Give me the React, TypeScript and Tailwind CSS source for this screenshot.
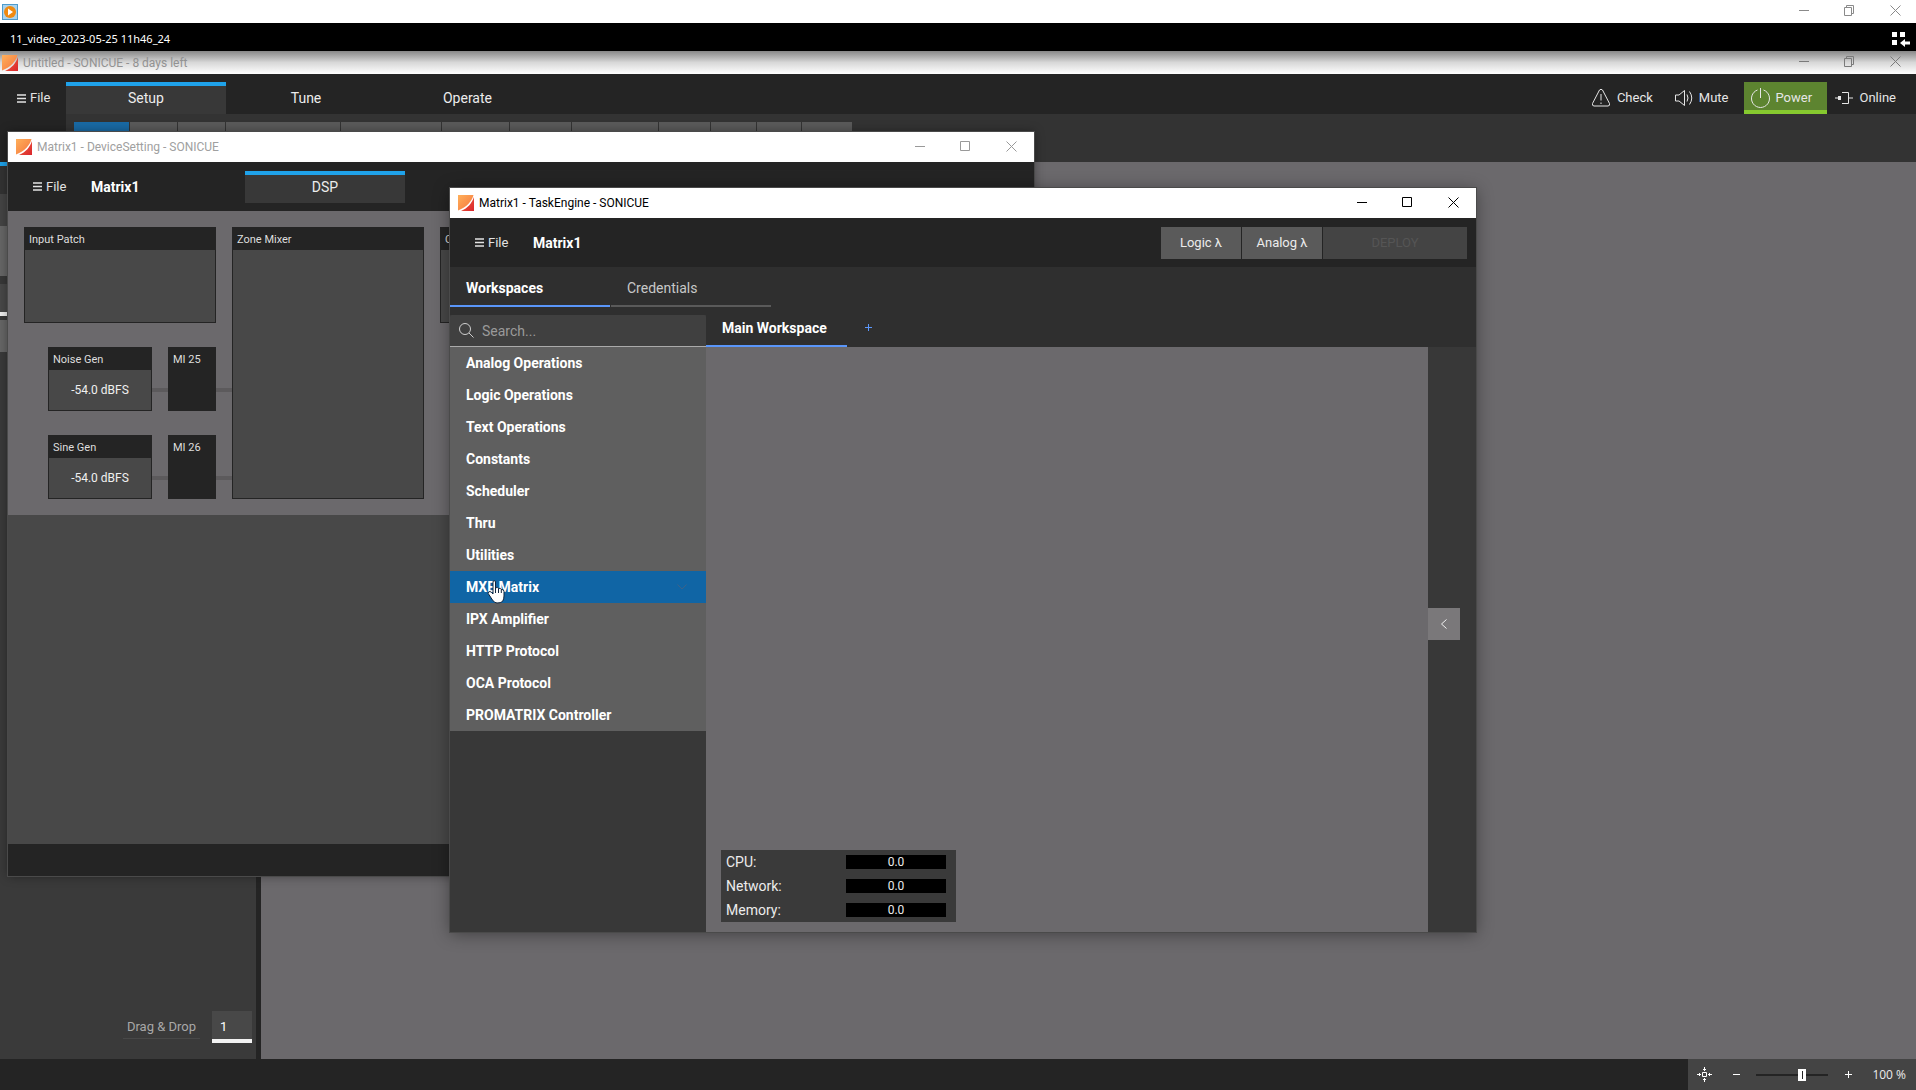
import type { ReactNode } from 'react';

const categories = [
  'Analog Operations',
  'Logic Operations',
  'Text Operations',
  'Constants',
  'Scheduler',
  'Thru',
  'Utilities',
  'MXE Matrix',
  'IPX Amplifier',
  'HTTP Protocol',
  'OCA Protocol',
  'PROMATRIX Controller',
];

const stats = [
  { label: 'CPU:', value: '0.0' },
  { label: 'Network:', value: '0.0' },
  { label: 'Memory:', value: '0.0' },
];

function SonicueLogo() {
  return (
    <svg width="16" height="16" viewBox="0 0 16 16" className="shrink-0" aria-hidden="true">
      <defs>
        <linearGradient id="logo-a" x1="0" y1="0" x2="1" y2="1">
          <stop offset="0" stopColor="#ffb05a" />
          <stop offset="1" stopColor="#f4733c" />
        </linearGradient>
        <linearGradient id="logo-b" x1="0" y1="0" x2="1" y2="1">
          <stop offset="0" stopColor="#f4683f" />
          <stop offset="1" stopColor="#d9252c" />
        </linearGradient>
      </defs>
      <path d="M0 0H15.500C14 6 9 12 0 15.500Z" fill="url(#logo-a)" />
      <path d="M16 2V16H3C10 13 14 8 16 2Z" fill="url(#logo-b)" />
    </svg>
  );
}

function WindowControls({ restored = false, className }: { restored?: boolean; className: string }) {
  return (
    <div className={`flex items-center ${className}`}>
      <button type="button" aria-label="Minimize" className="flex w-[45px] justify-center">
        <svg width="11" height="11" viewBox="0 0 11 11" stroke="currentColor" fill="none">
          <path d="M0 5.500H10" />
        </svg>
      </button>
      <button type="button" aria-label={restored ? 'Restore' : 'Maximize'} className="flex w-[45px] justify-center">
        <svg width="11" height="11" viewBox="0 0 11 11" stroke="currentColor" fill="none">
          {restored ? <path d="M.5 2.500H7.500V10.500H.5ZM2.500 2.500V.5H9.500V8.500H7.500" /> : <path d="M.5 .5H9.500V9.500H.5Z" />}
        </svg>
      </button>
      <button type="button" aria-label="Close" className="flex w-[46px] justify-center">
        <svg width="11" height="11" viewBox="0 0 11 11" stroke="currentColor" fill="none">
          <path d="M.5 .5L10.500 10.500M10.500 .5L.5 10.500" />
        </svg>
      </button>
    </div>
  );
}

function FileButton({ className }: { className: string }) {
  return (
    <button type="button" className={`flex items-center gap-1 text-[13px] text-[#e2e2e2] ${className}`}>
      <svg width="9" height="9" viewBox="0 0 9 9" stroke="currentColor" strokeWidth="1.500" aria-hidden="true">
        <path d="M0 1H9M0 4.500H9M0 8H9" />
      </svg>
      File
    </button>
  );
}

function StatusButton({ label, children }: { label: string; children: ReactNode }) {
  return (
    <button type="button" className="flex h-8 items-center gap-[6px] text-[13px] text-[#e6e6e6]">
      {children}
      {label}
    </button>
  );
}

function MediaPlayerBar() {
  return (
    <>
      <div className="flex h-[23px] shrink-0 items-center justify-between bg-white pl-[2px]">
        <svg width="16" height="16" viewBox="0 0 16 16" aria-hidden="true">
          <rect x=".5" y=".5" width="15" height="15" fill="#a9d3ee" stroke="#4f9bcb" />
          <circle cx="8" cy="8" r="6" fill="#f08a10" />
          <path d="M6 4.500L11 8L6 11.500Z" fill="#fff" />
        </svg>
        <WindowControls restored className="-mr-0.5 pb-[2px] text-[#8a8a8a]" />
      </div>
      <div className="flex h-7 shrink-0 items-center justify-between bg-black pl-[10px] pr-[6px] pt-1 text-white">
        <span className="font-['Noto_Sans',sans-serif] text-[11px]">11_video_2023-05-25 11h46_24</span>
        <button type="button" aria-label="Switch to library">
          <svg width="18" height="16" viewBox="0 0 18 16" fill="#fff">
            <path d="M0 1H5V6H0ZM8 1H13V6H8ZM0 9H5V14H0ZM8 12L13 8V10.500H18V13.500H13V16Z" />
          </svg>
        </button>
      </div>
    </>
  );
}

function MainHeader() {
  return (
    <header className="shrink-0">
      <div className="flex h-[23px] items-center justify-between bg-linear-to-b from-[#888888] via-[#d8d8d8] to-white pl-[2px]">
        <div className="flex items-center gap-[5px] text-[12px] text-[#929292]">
          <SonicueLogo />
          Untitled - SONICUE - 8 days left
        </div>
        <WindowControls restored className="-mr-0.5 pb-[2px] text-[#7a7a7a]" />
      </div>
      <div className="flex bg-[#242424]">
        <div className="w-[66px] shrink-0">
          <FileButton className="mt-2 h-8 pl-[17px]" />
        </div>
        <div className="min-w-0 flex-1 pt-2">
          <div className="flex h-8 justify-between">
            <nav className="flex text-[14px] text-[#ececec]">
              <button type="button" className="w-40 border-t-4 border-[#1fa2ea] bg-[#383838] pb-1">Setup</button>
              <button type="button" className="w-40">Tune</button>
              <button type="button" className="w-[163px]">Operate</button>
            </nav>
            <div className="flex">
              <StatusButton label="Check">
                <svg width="20" height="20" viewBox="0 0 20 20" fill="none" stroke="currentColor" aria-hidden="true">
                  <path d="M8.500 2Q10 .5 11.500 2L18.500 15.500Q19 18 17 18H3Q1 18 1.500 15.500ZM10 6V12.500M10 14.500V16" />
                </svg>
              </StatusButton>
              <div className="w-[22px]" />
              <StatusButton label="Mute">
                <svg width="18" height="18" viewBox="0 0 18 18" fill="none" stroke="currentColor" aria-hidden="true">
                  <path d="M.5 6V12H4L9.500 16.500V1.500L4 6ZM12 5.500Q14 9 12 12.500M14.500 2.500Q19 9 14.500 15.500" />
                </svg>
              </StatusButton>
              <button
                type="button"
                className="ml-4 flex w-[83px] items-center gap-[5px] border-b-4 border-[#86c92f] bg-[#5d8430] pl-[7px] pt-1 text-[13px] text-[#e6e6e6]"
              >
                <svg width="19" height="20" viewBox="0 0 19 20" fill="none" stroke="currentColor" aria-hidden="true">
                  <path d="M6.500 2A9 9 0 1 0 12.500 2M9.500 0V10" />
                </svg>
                Power
              </button>
              <div className="w-2" />
              <StatusButton label="Online">
                <svg width="18" height="14" viewBox="0 0 18 14" fill="none" stroke="currentColor" aria-hidden="true">
                  <path d="M0 7H6M7 1.500H13.500V12.500H7M13.500 7H18" />
                  <path d="M3 5H6V9H3Z" fill="currentColor" stroke="none" />
                </svg>
              </StatusButton>
              <div className="w-5" />
            </div>
          </div>
          <div className="flex h-12 gap-px bg-[#333333] pl-2 pt-2">
            <div className="w-[55px] bg-[#196aa5]" />
            <div className="w-[47px] bg-[#5a5a5a]" />
            <div className="w-[47px] bg-[#5a5a5a]" />
            <div className="w-[114px] bg-[#5a5a5a]" />
            <div className="w-[100px] bg-[#5a5a5a]" />
            <div className="w-[67px] bg-[#5a5a5a]" />
            <div className="w-[61px] bg-[#5a5a5a]" />
            <div className="w-[86px] bg-[#5a5a5a]" />
            <div className="w-[51px] bg-[#5a5a5a]" />
            <div className="w-[45px] bg-[#5a5a5a]" />
            <div className="w-[44px] bg-[#5a5a5a]" />
            <div className="w-[50px] bg-[#5a5a5a]" />
          </div>
        </div>
      </div>
    </header>
  );
}

function DevicePanel() {
  return (
    <aside className="flex w-[261px] shrink-0 flex-col border-r-[5px] border-[#242424] bg-[#3a3a3a]">
      <div className="h-1 bg-[#1fa2ea]" />
      <div className="h-7 bg-[#333333]" />
      <div className="h-8 bg-[#444444]" />
      <div className="h-[50px] bg-[#666666]" />
      <div className="h-2 bg-[#383838]" />
      <div className="h-7 bg-[#484848]" />
      <div className="h-1 bg-[#f0f0f0]" />
      <div className="h-1 bg-[#383838]" />
      <div className="h-8 bg-[#666666]" />
      <div className="flex-1" />
      <div className="mb-4 flex items-start justify-end gap-3 pr-1">
        <label htmlFor="drag-count" className="border-b border-[#484848] px-1 pt-[5px] text-[13px] leading-[22px] text-[#a8a8a8]">
          Drag &amp; Drop
        </label>
        <input
          id="drag-count"
          type="text"
          defaultValue="1"
          className="h-8 w-10 border-b-4 border-[#f2f2f2] bg-[#484848] px-2 pt-[2px] text-[13px] text-white"
        />
      </div>
    </aside>
  );
}

function StatusBar() {
  return (
    <footer className="flex h-[31px] shrink-0 justify-end bg-[#242424]">
      <div className="flex items-center bg-[#444444] pl-[9px] pr-[10px] text-white">
        <button type="button" aria-label="Fit to view">
          <svg width="15" height="15" viewBox="0 0 15 15" fill="none" stroke="currentColor">
            <path d="M5.500 5.500H9.500V9.500H5.500ZM7.500 0V4M6 2.500H9M7.500 11V15M6 12.500H9M0 7.500H4M2.500 6V9M11 7.500H15M12.500 6V9" />
          </svg>
        </button>
        <button type="button" aria-label="Zoom out" className="ml-[21px]">
          <svg width="7" height="7" viewBox="0 0 7 7" stroke="currentColor">
            <path d="M0 3.500H7" />
          </svg>
        </button>
        <input
          type="range"
          aria-label="Zoom"
          min="0"
          max="100"
          defaultValue="65"
          className="ml-4 h-3 w-[72px] appearance-none bg-transparent [&::-webkit-slider-runnable-track]:h-[2px] [&::-webkit-slider-runnable-track]:bg-[#242424] [&::-webkit-slider-thumb]:-mt-[5px] [&::-webkit-slider-thumb]:h-3 [&::-webkit-slider-thumb]:w-2 [&::-webkit-slider-thumb]:appearance-none [&::-webkit-slider-thumb]:border-y-2 [&::-webkit-slider-thumb]:border-l-4 [&::-webkit-slider-thumb]:border-r-[3px] [&::-webkit-slider-thumb]:border-white [&::-webkit-slider-thumb]:bg-[#242424]"
        />
        <button type="button" aria-label="Zoom in" className="ml-[17px]">
          <svg width="7" height="7" viewBox="0 0 7 7" stroke="currentColor">
            <path d="M0 3.500H7M3.500 0V7" />
          </svg>
        </button>
        <span className="ml-5 font-['Open_Sans',sans-serif] text-[12px] text-[#ececec]">100 %</span>
      </div>
    </footer>
  );
}

function Block({ title, className, children }: { title: string; className: string; children?: ReactNode }) {
  return (
    <div className={`flex flex-col border border-[#242424] bg-[#484848] ${className}`}>
      <h3 className="h-[22px] bg-[#242424] pl-[4px] text-[11px] leading-[24px] text-[#dedede]">{title}</h3>
      {children}
    </div>
  );
}

function GeneratorRow({ name, input }: { name: string; input: string }) {
  return (
    <div className="flex h-16 pl-6">
      <Block title={name} className="w-[104px]">
        <div className="flex flex-1 items-center justify-center text-[12px] text-[#f0f0f0]">-54.0 dBFS</div>
      </Block>
      <div className="mt-[41px] h-[4px] w-4 bg-[#5c5a5c]" />
      <div className="w-12 bg-[#242424] pl-[5px] pt-[1px] text-[11px] leading-[24px] text-[#dedede]">{input}</div>
      <div className="mt-[41px] h-[4px] w-4 bg-[#5c5a5c]" />
    </div>
  );
}

function DeviceWindow() {
  return (
    <section className="absolute left-[8px] top-[132px] flex h-[744px] w-[1026px] flex-col bg-[#484848] shadow-[0_0_10px_rgba(0,0,0,0.4)] outline outline-[#4a4a4a]">
      <div className="flex h-[30px] shrink-0 items-center justify-between bg-white pl-2">
        <div className="flex items-center gap-[5px] text-[12px] text-[#a0a0a0]">
          <SonicueLogo />
          Matrix1 - DeviceSetting - SONICUE
        </div>
        <WindowControls className="pb-[2px] text-[#999999]" />
      </div>
      <div className="flex h-[49px] shrink-0 items-center bg-[#242424]">
        <FileButton className="w-[83px] pl-[25px]" />
        <h2 className="w-[154px] pt-[2px] text-[14px] font-bold text-white">Matrix1</h2>
        <button type="button" className="h-8 w-40 border-t-4 border-[#1fa2ea] bg-[#383838] pb-[2px] text-[14px] text-[#ececec]">DSP</button>
      </div>
      <div className="flex h-[304px] shrink-0 gap-4 overflow-hidden bg-[#6b696c] p-4">
        <div className="flex w-48 shrink-0 flex-col gap-6">
          <Block title="Input Patch" className="h-24 w-48" />
          <div className="-mr-4 flex flex-col gap-6">
            <GeneratorRow name="Noise Gen" input="MI 25" />
            <GeneratorRow name="Sine Gen" input="MI 26" />
          </div>
        </div>
        <Block title="Zone Mixer" className="w-48" />
        <Block title="Control" className="h-24 w-48" />
      </div>
      <div className="flex-1" />
      <div className="h-8 shrink-0 bg-[#242424]" />
    </section>
  );
}

function TaskEngineWindow() {
  return (
    <section className="absolute left-[450px] top-[188px] flex h-[744px] w-[1026px] flex-col bg-[#2f2f2f] shadow-[0_2px_16px_rgba(0,0,0,0.4)] outline outline-[#4a4a4a]">
      <div className="flex h-[30px] shrink-0 items-center justify-between bg-white pl-2">
        <div className="flex items-center gap-[5px] text-[12px] text-black">
          <SonicueLogo />
          Matrix1 - TaskEngine - SONICUE
        </div>
        <WindowControls className="pb-[2px] text-black" />
      </div>
      <div className="flex h-[49px] shrink-0 items-center bg-[#242424] pr-[9px]">
        <FileButton className="w-[83px] pl-[25px]" />
        <h2 className="flex-1 pt-[2px] text-[14px] font-bold text-white">Matrix1</h2>
        <div className="flex gap-px text-[13px] text-[#ececec]">
          <button type="button" className="h-8 w-20 bg-[#5a5a5a]">Logic λ</button>
          <button type="button" className="h-8 w-20 bg-[#5a5a5a]">Analog λ</button>
          <button type="button" disabled className="h-8 w-36 bg-[#444444] text-[#555555]">DEPLOY</button>
        </div>
      </div>
      <nav className="flex h-10 shrink-0 gap-px text-[14px]">
        <button type="button" className="w-40 border-b-2 border-[#5a96fa] pl-4 pt-1 text-left font-bold text-white">Workspaces</button>
        <button type="button" className="w-40 border-b-2 border-[#5a5a5a] pl-4 pt-1 text-left text-[#c8c8c8]">Credentials</button>
      </nav>
      <div className="mt-2 flex min-h-0 flex-1">
        <div className="flex w-64 shrink-0 flex-col bg-[#383838]">
          <label className="flex h-8 items-center gap-2 rounded-t-xs border-b border-[#aaaaaa] bg-[#404040] pl-[9px] text-[#cfcfcf]">
            <svg width="15" height="15" viewBox="0 0 15 15" fill="none" stroke="currentColor" aria-hidden="true">
              <circle cx="6" cy="6" r="5.500" />
              <path d="M10 10L14.500 14.500" />
            </svg>
            <input type="search" aria-label="Search" placeholder="Search..." className="w-40 bg-transparent pt-[2px] text-[14px] placeholder:text-[#9a9a9a]" />
          </label>
          <ul className="text-[14px] font-bold text-white">
            {categories.map((name) => (
              <li key={name}>
                <button
                  type="button"
                  className={`flex h-8 w-full items-center justify-between pl-4 pr-[19px] ${
                    name === 'MXE Matrix' ? 'bg-[#1065a5]' : 'bg-[#5f5f5f]'
                  }`}
                >
                  {name}
                  {name === 'MXE Matrix' && (
                    <svg width="10" height="6" viewBox="0 0 10 6" fill="none" stroke="#3c6288" aria-hidden="true">
                      <path d="M.5 .5L5 5L9.500 .5" />
                    </svg>
                  )}
                </button>
              </li>
            ))}
          </ul>
        </div>
        <div className="flex min-w-0 flex-1 flex-col">
          <div className="flex h-8 shrink-0">
            <button type="button" className="w-[141px] border-b-2 border-[#5a96fa] pb-1 pl-4 text-left text-[14px] font-bold text-white">
              Main Workspace
            </button>
            <button type="button" aria-label="Add workspace" className="ml-[18px] pb-[7px] text-[#5a96fa]">
              <svg width="7" height="7" viewBox="0 0 7 7" stroke="currentColor">
                <path d="M0 3.500H7M3.500 0V7" />
              </svg>
            </button>
          </div>
          <div className="flex min-h-0 flex-1">
            <div className="flex flex-1 items-end bg-[#6b696c] pb-[10px] pl-[15px]">
              <dl className="w-[235px] bg-[#3a3a3a] pl-[5px] pr-[10px] text-[14px] text-[#ececec]">
                {stats.map((s) => (
                  <div key={s.label} className="flex h-6 items-center justify-between">
                    <dt>{s.label}</dt>
                    <dd className="h-[14px] w-[100px] bg-black text-center text-[12px] leading-[14px]">{s.value}</dd>
                  </div>
                ))}
              </dl>
            </div>
            <div className="flex w-12 items-center bg-[#383838] pb-8">
              <button type="button" aria-label="Expand panel" className="flex size-8 items-center justify-center bg-[#7a787a] text-[#f0f0f0]">
                <svg width="6" height="10" viewBox="0 0 6 10" fill="none" stroke="currentColor">
                  <path d="M5.500 .5L.5 5L5.500 9.500" />
                </svg>
              </button>
            </div>
          </div>
        </div>
      </div>
    </section>
  );
}

function HandCursor() {
  return (
    <svg width="19" height="24" viewBox="0 0 19 24" className="absolute left-[487px] top-[580px]" aria-hidden="true">
      <path
        d="M6 2Q6 .7 7.200 .7Q8.500 .7 8.500 2V8Q10.500 6.500 11.500 8.500Q13.500 7.500 14.300 9.500Q17 9 17 11.500V16Q17 19 15.500 21.500Q13.500 23 10 23Q7.500 23 5.500 20L1.200 13.500Q.8 11.500 3 11.500Q4.500 12 6 14Z"
        fill="#fff"
        stroke="#10243c"
      />
      <path d="M8.500 8V13M11.500 8.500V13M14.300 9.500V13" stroke="#10243c" />
    </svg>
  );
}

export default function App() {
  return (
    <div className="relative flex h-screen flex-col overflow-hidden bg-[#6b696c] font-['Roboto',sans-serif]">
      <MediaPlayerBar />
      <MainHeader />
      <main className="flex min-h-0 flex-1">
        <DevicePanel />
        <div className="flex-1 bg-[#6b696c]" />
      </main>
      <StatusBar />
      <DeviceWindow />
      <TaskEngineWindow />
      <HandCursor />
    </div>
  );
}
